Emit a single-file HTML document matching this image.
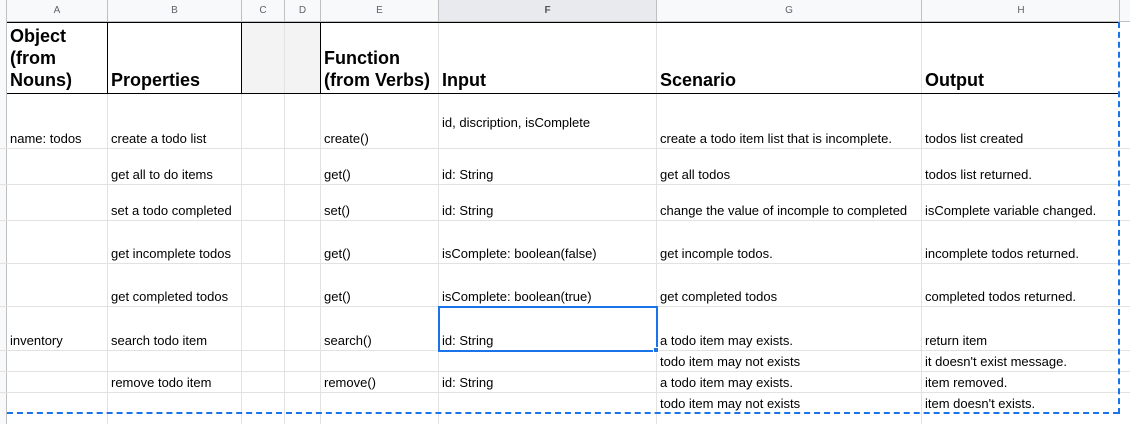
<!DOCTYPE html>
<html><head><meta charset="utf-8"><style>
body{margin:0;width:1130px;height:424px;overflow:hidden;background:#fff;font-family:"Liberation Sans",Arial,sans-serif;position:relative}
.a{position:absolute}
.hl{position:absolute;height:1px;background:#e2e2e2}
.vl{position:absolute;width:1px;background:#e2e2e2}
.t{position:absolute;font-size:13px;color:#000;white-space:nowrap;line-height:15px}
.h{position:absolute;font-size:18px;font-weight:bold;line-height:22px;color:#000}
.ch{position:absolute;top:0;height:21px;font-size:10px;color:#5f6368;text-align:center;line-height:22px;background:#f8f9fa}
</style></head><body>
<!-- column header bar -->
<div class="a" style="left:0;top:0;width:1130px;height:21px;background:#f8f9fa"></div>
<div class="a" style="left:0;top:21px;width:1130px;height:1px;background:#c0c0c0"></div>
<div class="a" style="left:0;top:0;width:6px;height:424px;background:#f8f9fa"></div>
<div class="a" style="left:6px;top:0;width:1px;height:424px;background:#c0c0c0"></div>
<div class="ch" style="left:7px;width:100px">A</div>
<div class="ch" style="left:108px;width:133px">B</div>
<div class="ch" style="left:242px;width:42px">C</div>
<div class="ch" style="left:285px;width:35px">D</div>
<div class="ch" style="left:321px;width:117px">E</div>
<div class="ch" style="left:439px;width:217px;background:#e8eaed;font-weight:bold;color:#555">F</div>
<div class="ch" style="left:657px;width:264px">G</div>
<div class="ch" style="left:922px;width:198px">H</div>
<!-- header column separators -->
<div class="a" style="left:107px;top:0;width:1px;height:21px;background:#c0c0c0"></div>
<div class="a" style="left:241px;top:0;width:1px;height:21px;background:#c0c0c0"></div>
<div class="a" style="left:284px;top:0;width:1px;height:21px;background:#c0c0c0"></div>
<div class="a" style="left:320px;top:0;width:1px;height:21px;background:#c0c0c0"></div>
<div class="a" style="left:438px;top:0;width:1px;height:21px;background:#c0c0c0"></div>
<div class="a" style="left:656px;top:0;width:1px;height:21px;background:#c0c0c0"></div>
<div class="a" style="left:921px;top:0;width:1px;height:21px;background:#c0c0c0"></div>
<div class="a" style="left:1119px;top:0;width:1px;height:21px;background:#c0c0c0"></div>
<!-- C/D grey in title row -->
<div class="a" style="left:242px;top:22px;width:78px;height:71px;background:#f3f3f3"></div>
<!-- grid vertical lines -->
<div class="vl" style="left:107px;top:22px;height:402px"></div>
<div class="vl" style="left:241px;top:22px;height:402px"></div>
<div class="vl" style="left:284px;top:22px;height:402px"></div>
<div class="vl" style="left:320px;top:22px;height:402px"></div>
<div class="vl" style="left:438px;top:22px;height:402px"></div>
<div class="vl" style="left:656px;top:22px;height:402px"></div>
<div class="vl" style="left:921px;top:22px;height:402px"></div>
<!-- black lines in title row -->
<div class="a" style="left:107px;top:22px;width:1px;height:71px;background:#000"></div>
<div class="a" style="left:241px;top:22px;width:1px;height:71px;background:#000"></div>
<div class="a" style="left:320px;top:22px;width:1px;height:71px;background:#000"></div>
<div class="a" style="left:7px;top:22px;width:1113px;height:1px;background:#000"></div>
<div class="a" style="left:7px;top:93px;width:1113px;height:1px;background:#000"></div>
<!-- horizontal lines -->
<div class="hl" style="left:0;top:148px;width:1130px"></div>
<div class="hl" style="left:0;top:184px;width:1130px"></div>
<div class="hl" style="left:0;top:220px;width:1130px"></div>
<div class="hl" style="left:0;top:263px;width:1130px"></div>
<div class="hl" style="left:0;top:306px;width:1130px"></div>
<div class="hl" style="left:0;top:350px;width:1130px"></div>
<div class="hl" style="left:0;top:371px;width:1130px"></div>
<div class="hl" style="left:0;top:392px;width:1130px"></div>
<!-- dashed selection border -->
<div class="a" style="left:7px;top:412px;width:1112px;height:0;border-top:2px dashed #1a73e8"></div>
<div class="a" style="left:1118px;top:22px;width:0;height:392px;border-left:2px dashed #1a73e8"></div>
<!-- header text -->
<div class="h" style="left:10px;top:25px">Object<br>(from<br>Nouns)</div>
<div class="h" style="left:111px;top:69px">Properties</div>
<div class="h" style="left:324px;top:47px">Function<br>(from Verbs)</div>
<div class="h" style="left:442px;top:69px">Input</div>
<div class="h" style="left:660px;top:69px">Scenario</div>
<div class="h" style="left:925px;top:69px">Output</div>
<!-- rows: text top = line - 18 -->
<div class="t" style="left:10px;top:131px">name: todos</div>
<div class="t" style="left:111px;top:131px">create a todo list</div>
<div class="t" style="left:324px;top:131px">create()</div>
<div class="t" style="left:442px;top:115px">id, discription, isComplete</div>
<div class="t" style="left:660px;top:131px">create a todo item list that is incomplete.</div>
<div class="t" style="left:925px;top:131px">todos list created</div>

<div class="t" style="left:111px;top:167px">get all to do items</div>
<div class="t" style="left:324px;top:167px">get()</div>
<div class="t" style="left:442px;top:167px">id: String</div>
<div class="t" style="left:660px;top:167px">get all todos</div>
<div class="t" style="left:925px;top:167px">todos list returned.</div>

<div class="t" style="left:111px;top:203px">set a todo completed</div>
<div class="t" style="left:324px;top:203px">set()</div>
<div class="t" style="left:442px;top:203px">id: String</div>
<div class="t" style="left:660px;top:203px">change the value of incomple to completed</div>
<div class="t" style="left:925px;top:203px">isComplete variable changed.</div>

<div class="t" style="left:111px;top:246px">get incomplete todos</div>
<div class="t" style="left:324px;top:246px">get()</div>
<div class="t" style="left:442px;top:246px">isComplete: boolean(false)</div>
<div class="t" style="left:660px;top:246px">get incomple todos.</div>
<div class="t" style="left:925px;top:246px">incomplete todos returned.</div>

<div class="t" style="left:111px;top:289px">get completed todos</div>
<div class="t" style="left:324px;top:289px">get()</div>
<div class="t" style="left:442px;top:289px">isComplete: boolean(true)</div>
<div class="t" style="left:660px;top:289px">get completed todos</div>
<div class="t" style="left:925px;top:289px">completed todos returned.</div>

<div class="t" style="left:10px;top:333px">inventory</div>
<div class="t" style="left:111px;top:333px">search todo item</div>
<div class="t" style="left:324px;top:333px">search()</div>
<div class="t" style="left:442px;top:333px">id: String</div>
<div class="t" style="left:660px;top:333px">a todo item may exists.</div>
<div class="t" style="left:925px;top:333px">return item</div>

<div class="t" style="left:660px;top:354px">todo item may not exists</div>
<div class="t" style="left:925px;top:354px">it doesn't exist message.</div>

<div class="t" style="left:111px;top:375px">remove todo item</div>
<div class="t" style="left:324px;top:375px">remove()</div>
<div class="t" style="left:442px;top:375px">id: String</div>
<div class="t" style="left:660px;top:375px">a todo item may exists.</div>
<div class="t" style="left:925px;top:375px">item removed.</div>

<div class="t" style="left:660px;top:396px">todo item may not exists</div>
<div class="t" style="left:925px;top:396px">item doesn't exists.</div>

<!-- active cell -->
<div class="a" style="left:438px;top:306px;width:216px;height:42px;border:2px solid #1a73e8"></div>
<div class="a" style="left:653px;top:347px;width:6px;height:6px;background:#1a73e8;border:1px solid #fff;box-sizing:border-box"></div>
</body></html>
